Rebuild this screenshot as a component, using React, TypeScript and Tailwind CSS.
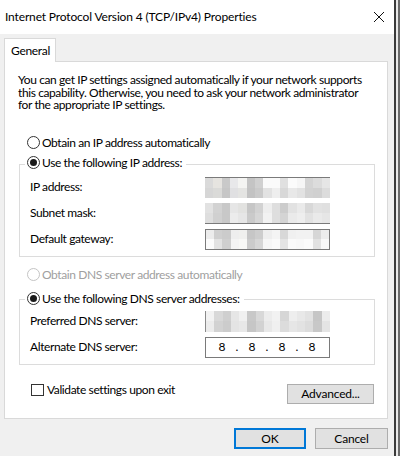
import React from "react";

const F = { fontFamily: 'Lato, "Noto Sans", sans-serif' };

type Cells = string[][];

const mosaics: Record<string, Cells> = {
  ip: [
    ["#dadada", "#e6e4e0", "#c9c9c9", "#e8e8ea", "#f4f4f2", "#c4c4c4", "#d0d0d0", "#fafafa", "#fafafa", "#e0e0e0", "#fbfbfb", "#f6f6f6", "#d4d4d4", "#dcdcdc", "#e6e6e6"],
    ["#d6d6d6", "#dadad8", "#c6c6c6", "#e0e0e2", "#e4e4e2", "#c2c2c2", "#cacaca", "#e2e2e2", "#eeeeee", "#d8d8d8", "#e8e8e8", "#e2e2e2", "#d2d2d2", "#d0d0d0", "#dcdcdc"],
  ],
  mask: [
    ["#e2e2e2", "#d2d2d2", "#c8c8c8", "#e6e6e6", "#e2e2e0", "#c6c6c6", "#d2d2d2", "#eeeeee", "#dedede", "#cccccc", "#e2e2e2", "#eaeaea", "#d8d8d8", "#e2e2e2", "#e0e0e0"],
    ["#dedede", "#d0d0d0", "#c8c8c8", "#ececec", "#e6e6e6", "#cacaca", "#d6d6d6", "#f2f2f2", "#dedede", "#d4d4d4", "#eaeaea", "#eeeeee", "#e2e2e2", "#eaeaea", "#e6e6e6"],
  ],
  gw: [
    ["#ececec", "#cfcfcf", "#cbcbcb", "#eeeeee", "#f0f0ee", "#c6c6c6", "#cdcdcd", "#eeeeee", "#f4f4f4", "#d8d8d8", "#f0f0f0", "#f2f2f2", "#f2f2f2", "#d6d6d6", "#ececec"],
    ["#fbfbfb", "#e2e2e2", "#cfcfcf", "#f4f4f4", "#f8f8f6", "#cbcbcb", "#d6d6d6", "#f6f6f6", "#fafafa", "#e4e4e4", "#fafafa", "#f8f8f8", "#fbfbfb", "#e2e2e2", "#f8f8f8"],
  ],
  dns: [
    ["#f2f2f2", "#d8d8d8", "#cfcfcf", "#e6e6e6", "#f0f0f0", "#c8c8c8", "#d8d8d8", "#ececec", "#f2f2f2", "#d6d6d6", "#eeeeee", "#e8e8e8", "#e2e2e2", "#c6c6c6", "#ececec"],
    ["#ececec", "#d2d2d2", "#cccccc", "#e4e4e4", "#e8e8e8", "#c6c6c6", "#d2d2d2", "#e8e8e8", "#f0f0f0", "#dcdcdc", "#e6e6e6", "#e2e2e2", "#dcdcdc", "#c8c8c8", "#e4e4e4"],
  ],
};

function Mosaic({ cells, border }: { cells: Cells; border: "top" | "bottom" | "all" | "left" }) {
  const cls =
    border === "top"
      ? "border-t border-t-[#7a7a7a]"
      : border === "bottom"
      ? "border-b border-b-[#7a7a7a]"
      : border === "left"
      ? "border-l border-l-[#8a8a8a]"
      : "border border-[#7a7a7a]";
  return (
    <div className={`w-[125px] h-[21px] flex flex-col ${cls}`}>
      {cells.map((row, i) => (
        <div key={i} className="flex flex-1">
          {row.map((c, j) => (
            <div key={j} className="flex-1" style={{ backgroundColor: c }} />
          ))}
        </div>
      ))}
    </div>
  );
}

function Radio({ checked, disabled }: { checked?: boolean; disabled?: boolean }) {
  return (
    <span
      className={`w-[13px] h-[13px] rounded-full border bg-white flex items-center justify-center shrink-0 ${
        disabled ? "border-[#c4c4c4]" : "border-[#333333]"
      }`}
    >
      {checked && <span className="w-[7px] h-[7px] rounded-full bg-[#1a1a1a]" />}
    </span>
  );
}

function Row({ label, children }: { label: string; children: React.ReactNode }) {
  return (
    <div className="flex items-center h-[21px]">
      <span className="w-[185px] pl-[10px] text-[12px] tracking-[-0.4px] text-black leading-[14px] whitespace-nowrap">
        {label}
      </span>
      {children}
    </div>
  );
}

export default function App() {
  return (
    <div className="w-[400px] h-[456px] flex overflow-hidden" style={F}>
      <div className="w-[394px] h-full flex flex-col bg-[#f0f0f0]">
        {/* title bar */}
        <div className="h-[34px] bg-white flex items-center justify-between pl-[5px] pr-[9px] shrink-0">
          <span className="text-[12px] tracking-[-0.15px] text-black leading-[16px] -mt-[1px] whitespace-nowrap">
            Internet Protocol Version 4 (TCP/IPv4) Properties
          </span>
          <svg width="12" height="12" viewBox="0 0 12 12" className="-mt-[1px]">
            <path d="M1 1 L11 11 M11 1 L1 11" stroke="#111" strokeWidth="1" fill="none" />
          </svg>
        </div>

        {/* tab */}
        <div className="pl-[4px] pt-[4px] flex">
          <div className="w-[52px] h-[24px] bg-white border border-b-0 border-[#d9d9d9] flex items-center pl-[6px] text-[12px] tracking-[-0.3px] text-black relative z-10 -mb-[1px]">
            General
          </div>
        </div>

        {/* panel */}
        <div className="ml-[4px] mr-[6px] bg-white border border-[#d9d9d9] h-[358px] flex flex-col shrink-0">
          <p className="pt-[12px] pl-[13px] text-[12px] tracking-[-0.4px] leading-[12.5px] text-black whitespace-nowrap">
            You can get IP settings assigned automatically if your network supports
            <br />
            this capability. Otherwise, you need to ask your network administrator
            <br />
            for the appropriate IP settings.
          </p>

          <div className="mt-[21px] h-[20px] flex items-center pl-[22px] gap-[2px] text-[12px] tracking-[-0.4px] text-black">
            <Radio />
            <span>Obtain an IP address automatically</span>
          </div>

          {/* IP group */}
          <div className="mt-[11px] ml-[14px] mr-[12px] border border-[#dcdcdc] pb-[6px]">
            <div className="-mt-[12px] h-[20px] flex">
              <div className="ml-[5px] px-[2px] pr-[4px] bg-white flex items-center gap-[2px] text-[12px] tracking-[-0.4px] text-black">
                <Radio checked />
                <span>Use the following IP address:</span>
              </div>
            </div>
            <div className="mt-[4px] flex flex-col gap-[5px]">
              <Row label="IP address:">
                <Mosaic cells={mosaics.ip} border="top" />
              </Row>
              <Row label="Subnet mask:">
                <Mosaic cells={mosaics.mask} border="bottom" />
              </Row>
              <Row label="Default gateway:">
                <Mosaic cells={mosaics.gw} border="all" />
              </Row>
            </div>
          </div>

          <div className="mt-[8px] h-[20px] flex items-center pl-[22px] gap-[2px] text-[12px] tracking-[-0.4px] text-[#a0a0a0]">
            <Radio disabled />
            <span>Obtain DNS server address automatically</span>
          </div>

          {/* DNS group */}
          <div className="mt-[14px] ml-[14px] mr-[12px] border border-[#dcdcdc] pb-[6px]">
            <div className="-mt-[11px] h-[20px] flex">
              <div className="ml-[5px] px-[2px] pr-[4px] bg-white flex items-center gap-[2px] text-[12px] tracking-[-0.4px] text-black">
                <Radio checked />
                <span>Use the following DNS server addresses:</span>
              </div>
            </div>
            <div className="mt-[2px] flex flex-col gap-[5px]">
              <Row label="Preferred DNS server:">
                <Mosaic cells={mosaics.dns} border="left" />
              </Row>
              <Row label="Alternate DNS server:">
                <div className="w-[125px] h-[21px] border border-[#7a7a7a] flex items-center pl-[5px] text-[12px] text-black">
                  <span className="w-[22px] text-center">8</span>
                  <span className="w-[8px] text-center">.</span>
                  <span className="w-[22px] text-center">8</span>
                  <span className="w-[8px] text-center">.</span>
                  <span className="w-[22px] text-center">8</span>
                  <span className="w-[8px] text-center">.</span>
                  <span className="w-[22px] text-center">8</span>
                </div>
              </Row>
            </div>
          </div>

          <div className="mt-[19px] ml-[26px] mr-[13px] flex items-start justify-between">
            <div className="flex items-center gap-[3px] text-[12px] tracking-[-0.4px] text-black h-[12px]">
              <span className="w-[13px] h-[12px] border border-[#333333] bg-white shrink-0" />
              <span className="leading-[14px]">Validate settings upon exit</span>
            </div>
            <button className="w-[87px] h-[20px] bg-[#e1e1e1] border border-[#adadad] text-[12px] tracking-[-0.2px] text-black flex items-center justify-center">
              Advanced...
            </button>
          </div>
        </div>

        {/* bottom buttons */}
        <div className="mt-[9px] flex justify-end gap-[9px] pr-[6px]">
          <button className="w-[72px] h-[21px] bg-[#e1e1e1] border-2 border-[#0078d7] text-[12px] text-black flex items-center justify-center">
            OK
          </button>
          <button className="w-[73px] h-[21px] bg-[#e1e1e1] border border-[#adadad] text-[12px] tracking-[-0.2px] text-black flex items-center justify-center">
            Cancel
          </button>
        </div>
      </div>
      <div className="w-[2px] h-full bg-[#3a3a3a]" />
      <div className="w-[2px] h-full bg-[#e8e8e8]" />
      <div className="w-[2px] h-full bg-[#6a6a6a]" />
    </div>
  );
}
